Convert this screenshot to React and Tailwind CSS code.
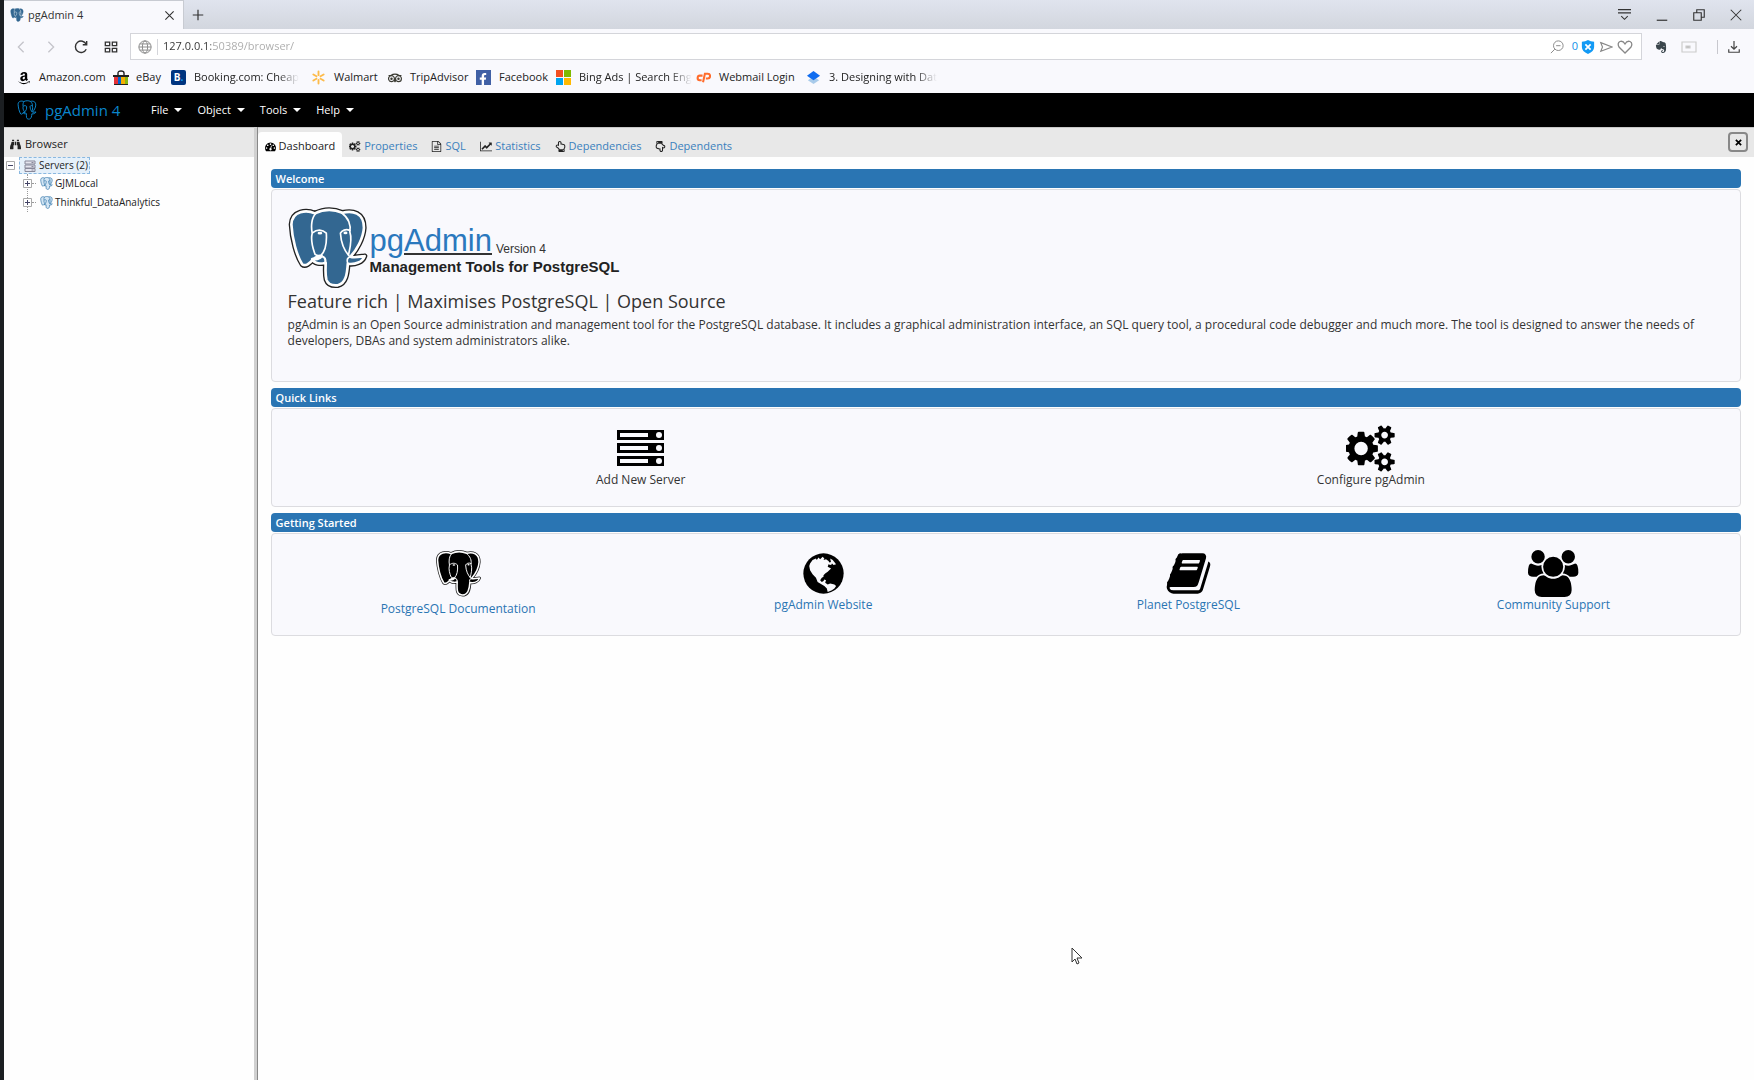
import React from "react";
import { SiPostgresql, SiTripadvisor, SiEvernote } from "react-icons/si";
import { FaBinoculars, FaAmazon, FaFacebookF, FaRegHandPointUp } from "react-icons/fa";

const FA = {
  cogs: [1920, "M832 896q0-106-75-181t-181-75-181 75-75 181 75 181 181 75 181-75 75-181zm768 512q0-52-38-90t-90-38-90 38-38 90q0 53 37.5 90.5t90.5 37.5 90.5-37.5 37.5-90.5zm0-1024q0-52-38-90t-90-38-90 38-38 90q0 53 37.5 90.5t90.5 37.5 90.5-37.5 37.5-90.5zm-384 421v185q0 10-7 19.5t-16 10.5l-155 24q-11 35-32 76 34 48 90 115 7 11 7 20 0 12-7 19-23 30-82.5 89.5t-78.5 59.5q-11 0-21-7l-115-90q-37 19-77 31-11 108-23 155-7 24-30 24h-186q-11 0-20-7.5t-10-17.5l-23-153q-34-10-75-31l-118 89q-7 7-20 7-11 0-21-8-144-133-144-160 0-9 7-19 10-14 41-53t47-61q-23-44-35-82l-152-24q-10-1-17-9.5t-7-19.5v-185q0-10 7-19.5t16-10.5l155-24q11-35 32-76-34-48-90-115-7-11-7-20 0-12 7-20 22-30 82-89t79-59q11 0 21 7l115 90q34-18 77-32 11-108 23-154 7-24 30-24h186q11 0 20 7.5t10 17.5l23 153q34 10 75 31l118-89q8-7 20-7 11 0 21 8 144 133 144 160 0 8-7 19-12 16-42 54t-45 60q23 48 34 82l152 23q10 2 17 10.5t7 19.5zm640 533v140q0 16-149 31-12 27-30 52 51 113 51 138 0 4-4 7-122 71-124 71-8 0-46-47t-52-68q-20 2-30 2t-30-2q-14 21-52 68t-46 47q-2 0-124-71-4-3-4-7 0-25 51-138-18-25-30-52-149-15-149-31v-140q0-16 149-31 13-29 30-52-51-113-51-138 0-4 4-7 4-2 35-20t59-34 30-16q8 0 46 46.5t52 67.5q20-2 30-2t30 2q51-71 92-112l6-2q4 0 124 70 4 3 4 7 0 25-51 138 17 23 30 52 149 15 149 31zm0-1024v140q0 16-149 31-12 27-30 52 51 113 51 138 0 4-4 7-122 71-124 71-8 0-46-47t-52-68q-20 2-30 2t-30-2q-14 21-52 68t-46 47q-2 0-124-71-4-3-4-7 0-25 51-138-18-25-30-52-149-15-149-31v-140q0-16 149-31 13-29 30-52-51-113-51-138 0-4 4-7 4-2 35-20t59-34 30-16q8 0 46 46.5t52 67.5q20-2 30-2t30 2q51-71 92-112l6-2q4 0 124 70 4 3 4 7 0 25-51 138 17 23 30 52 149 15 149 31z"],
  users: [1920, "M593 896q-162 5-265 128h-134q-82 0-138-40.5t-56-118.5q0-353 124-353 6 0 43.5 21t97.5 42.5 119 21.5q67 0 133-23-5 37-5 66 0 139 81 256zm1071 637q0 120-73 189.5t-194 69.5h-874q-121 0-194-69.5t-73-189.5q0-53 3.5-103.5t14-109 26.5-108.5 43-97.5 62-81 85.5-53.5 111.5-20q10 0 43 21.5t73 48 107 48 135 21.5 135-21.5 107-48 73-48 43-21.5q61 0 111.5 20t85.5 53.5 62 81 43 97.5 26.5 108.5 14 109 3.5 103.5zm-1024-1277q0 106-75 181t-181 75-181-75-75-181 75-181 181-75 181 75 75 181zm704 384q0 159-112.5 271.5t-271.5 112.5-271.5-112.5-112.5-271.5 112.5-271.5 271.5-112.5 271.5 112.5 112.5 271.5zm576 225q0 78-56 118.5t-138 40.5h-134q-103-123-265-128 81-117 81-256 0-29-5-66 66 23 133 23 59 0 119-21.5t97.5-42.5 43.5-21q124 0 124 353zm-128-609q0 106-75 181t-181 75-181-75-75-181 75-181 181-75 181 75 75 181z"],
  book: [1792, "M1703 478q40 57 18 129l-275 906q-19 64-76.5 107.5t-122.5 43.5h-923q-77 0-148.5-53.5t-99.5-131.5q-24-67-2-127 0-4 3-27t4-37q1-8-3-21.5t-3-19.5q2-11 8-21t16.5-23.5 16.5-23.5q23-38 45-91.5t30-91.5q3-10 .5-30t-.5-28q3-11 17-28t17-23q21-36 42-92t25-90q1-9-2.5-32t.5-28q4-13 22-30.5t22-22.5q19-26 42.5-84.5t27.5-96.5q1-8-3-25.5t-2-26.5q2-8 9-18t18-23 17-21q8-12 16.5-30.5t15-35 16-36 19.5-32 26.5-23.5 36-11.5 47.5 5.5l-1 3q38-9 51-9h761q74 0 114 56t18 130l-274 906q-36 119-71.5 153.5t-128.5 34.5h-869q-27 0-38 15-11 16-1 43 24 70 144 70h923q29 0 56-15.5t35-41.5l300-987q7-22 5-57 38 15 59 43zm-1064 2q-4 13 2 22.5t20 9.5h608q13 0 25.5-9.5t16.5-22.5l21-64q4-13-2-22.5t-20-9.5h-608q-13 0-25.5 9.5t-16.5 22.5zm-83 256q-4 13 2 22.5t20 9.5h608q13 0 25.5-9.5t16.5-22.5l21-64q4-13-2-22.5t-20-9.5h-608q-13 0-25.5 9.5t-16.5 22.5z"],
  gauge: [1792, "M384 1152q0-53-37.5-90.5t-90.5-37.5-90.5 37.5-37.5 90.5 37.5 90.5 90.5 37.5 90.5-37.5 37.5-90.5zm192-448q0-53-37.5-90.5t-90.5-37.5-90.5 37.5-37.5 90.5 37.5 90.5 90.5 37.5 90.5-37.5 37.5-90.5zm428 481l101-382q6-26-7.5-48.5t-38.5-29.5-48 6.5-30 39.5l-101 382q-60 5-107 43.5t-63 98.5q-20 77 20 146t117 89 146-20 89-117q16-60-6-117t-72-91zm660-33q0-53-37.5-90.5t-90.5-37.5-90.5 37.5-37.5 90.5 37.5 90.5 90.5 37.5 90.5-37.5 37.5-90.5zm-640-640q0-53-37.5-90.5t-90.5-37.5-90.5 37.5-37.5 90.5 37.5 90.5 90.5 37.5 90.5-37.5 37.5-90.5zm448 192q0-53-37.5-90.5t-90.5-37.5-90.5 37.5-37.5 90.5 37.5 90.5 90.5 37.5 90.5-37.5 37.5-90.5zm320 448q0 261-141 483-19 29-54 29h-1402q-35 0-54-29-141-221-141-483 0-182 71-348t191-286 286-191 348-71 348 71 286 191 191 286 71 348z"],
  chart: [2048, "M2048 1536v128h-2048v-1536h128v1408h1920zm-128-1248v435q0 21-19.5 29.5t-35.5-7.5l-121-121-633 633q-10 10-23 10t-23-10l-233-233-416 416-192-192 585-585q10-10 23-10t23 10l233 233 464-464-121-121q-16-16-7.5-35.5t29.5-19.5h435q14 0 23 9t9 23z"],
  file: [1792, "M1596 380q28 28 48 76t20 88v1152q0 40-28 68t-68 28h-1344q-40 0-68-28t-28-68v-1600q0-40 28-68t68-28h896q40 0 88 20t76 48zm-444-244v376h376q-10-29-22-41l-313-313q-12-12-41-22zm384 1528v-1024h-416q-40 0-68-28t-28-68v-416h-768v1536h1280zm-1024-864q0-14 9-23t23-9h704q14 0 23 9t9 23v64q0 14-9 23t-23 9h-704q-14 0-23-9t-9-23v-64zm736 224q14 0 23 9t9 23v64q0 14-9 23t-23 9h-704q-14 0-23-9t-9-23v-64q0-14 9-23t23-9h704zm0 256q14 0 23 9t9 23v64q0 14-9 23t-23 9h-704q-14 0-23-9t-9-23v-64q0-14 9-23t23-9h704z"],
};

function Fa({ name, className }) {
  const [width, d] = FA[name];
  return (
    <svg viewBox={`0 0 ${width} 1792`} className={className} fill="currentColor" aria-hidden="true">
      <path d={d} />
    </svg>
  );
}

const SILHOUETTE =
  "M92 33C68 22 24 24 22 66C24 108 38 160 54 184C64 193 76 182 88 168C98 160 104 162 112 160L105 168C96 168 88 166 84 169C90 182 108 184 124 180C124 200 122 214 126 230C132 248 150 248 160 247C184 242 188 214 190 183C212 186 234 178 240 160C226 162 208 166 198 162C216 142 236 108 238 76C238 30 204 24 174 31C148 20 118 20 92 33Z";

function Elephant({ fill, className }) {
  return (
    <svg viewBox="12 14 238 244" className={className} strokeLinejoin="round" strokeLinecap="round" aria-hidden="true">
      <path d={SILHOUETTE} fill="#fff" stroke="#222" strokeWidth="16" />
      <path d={SILHOUETTE} fill={fill} stroke="#fff" strokeWidth="8" />
      <g fill="none" stroke="#fff" strokeWidth="5">
        <path d="M94 34C82 46 80 72 84 92C78 116 86 136 92 154C98 160 104 158 110 158C124 144 128 122 126 92C114 80 98 80 86 90" />
        <path d="M172 32C192 46 200 68 196 88C204 112 196 138 192 156" />
        <path d="M196 84C184 78 172 84 168 92C170 124 180 144 194 160" />
        <path d="M112 160C122 162 126 168 124 182M190 183C186 172 188 164 198 162" />
      </g>
      <ellipse cx="107" cy="92" rx="7" ry="4" fill="#fff" />
      <ellipse cx="183" cy="91" rx="6" ry="4" fill="#fff" />
      <path d="M84 169C92 180 108 183 122 179C124 168 120 162 112 162C106 170 96 172 84 169Z" fill={fill} stroke="#fff" strokeWidth="5" />
    </svg>
  );
}

function SmallElephant({ className, fill, line, lineWidth = "10" }) {
  return (
    <svg viewBox="12 14 238 244" className={className} strokeLinejoin="round" aria-hidden="true">
      <path d={SILHOUETTE} fill={fill} stroke={line === "#fff" ? fill : line} strokeWidth={lineWidth} />
      <path
        d="M94 34C82 46 80 72 84 92C78 116 86 136 100 158C124 144 128 122 126 92C114 80 98 80 86 90M172 32C192 46 200 68 196 88C204 112 196 138 192 156M196 84C184 78 172 84 168 92C170 124 180 144 194 160"
        fill="none"
        stroke={line}
        strokeWidth={lineWidth}
      />
    </svg>
  );
}

function ServerRack({ className }) {
  return (
    <svg viewBox="0 0 47 47" className={className} aria-hidden="true">
      <path d="M0 5h47v10H0zM0 18h47v10H0zM0 31h47v10H0z" fill="#000" />
      <path d="M3 8h28v4H3zM3 21h28v4H3zM3 34h28v4H3z" fill="#f9f9fd" />
      <g fill="#f9f9fd">
        <circle cx="42" cy="10" r="3" />
        <circle cx="42" cy="23" r="3" />
        <circle cx="42" cy="36" r="3" />
      </g>
    </svg>
  );
}

function Globe({ className }) {
  return (
    <svg viewBox="0 0 56 56" className={className} aria-hidden="true">
      <circle cx="28" cy="28" r="24" fill="#000" />
      <path
        d="M12 16L15 12L19 10L20 12L22 9L24 11L27 8L29 10L28 12L31 11L34 13L35 15L38 14L38 17L36 18L34 17L33 20L37 22L33 26L30 28L28 30L28 32L26 33L24 36L26 38L28 37L29 35L31 36L30 39L33 41L36 40L41 41L43 43L41 46L38 48L33 50L32 46L29 43L26 41L21 38L19 33L15 29L12 24L11 19Z"
        fill="#f9f9fd"
      />
      <path d="M36 10L39 12L43 17L40 18L37 15Z" fill="#f9f9fd" />
    </svg>
  );
}

function Line({ children, className, width = "1.3" }) {
  return (
    <svg viewBox="0 0 16 16" className={className} fill="none" stroke="currentColor" strokeWidth={width} aria-hidden="true">
      {children}
    </svg>
  );
}

const bookmarks = [
  { label: "Amazon.com", w: "w-[97px]", icon: <FaAmazon className="size-[14px] text-black" /> },
  {
    label: "eBay",
    w: "w-[58px]",
    icon: (
      <svg viewBox="0 0 16 16" className="size-4 shrink-0">
        <path d="M5 5V3q0-2 3-2t3 2v2" fill="none" stroke="#222" strokeWidth="1.4" />
        <path d="M0 5h16v2H0z" fill="#222" />
        <path d="M1 7h4v8H1z" fill="#e53238" />
        <path d="M5 7h3v8H5z" fill="#0064d2" />
        <path d="M8 7h4v8H8z" fill="#f5af02" />
        <path d="M12 7h3v8h-3z" fill="#86b817" />
        <path d="M1 14h14v1H1z" fill="#222" />
      </svg>
    ),
  },
  {
    label: "Booking.com: Cheap",
    w: "w-[140px]",
    fade: true,
    icon: (
      <span className="flex size-[15px] items-center justify-center rounded-[2px] bg-[#003580] text-[10px] font-bold text-white">
        B<span className="text-[#12a5f4]">.</span>
      </span>
    ),
  },
  {
    label: "Walmart",
    w: "w-[76px]",
    icon: (
      <svg viewBox="0 0 16 16" className="size-[15px]" stroke="#fdbb4a" strokeWidth="2" strokeLinecap="round">
        <path d="M8 1.500v4M8 10.500v4M2.500 4.800l3.300 1.900M10.200 9.300l3.300 1.900M2.500 11.200l3.300-1.900M10.200 6.700l3.300-1.900" />
      </svg>
    ),
  },
  { label: "TripAdvisor", w: "w-[89px]", icon: <SiTripadvisor className="size-[14px] text-[#3a3a32]" /> },
  {
    label: "Facebook",
    w: "w-[80px]",
    icon: (
      <span className="flex size-[15px] items-end justify-end bg-[#4060a5] pr-[2px]">
        <FaFacebookF className="size-3 text-white" />
      </span>
    ),
  },
  {
    label: "Bing Ads | Search Eng",
    w: "w-[140px]",
    fade: true,
    icon: (
      <span className="grid size-[15px] grid-cols-2 gap-px">
        <i className="bg-[#f25022]" />
        <i className="bg-[#7fba00]" />
        <i className="bg-[#00a4ef]" />
        <i className="bg-[#ffb900]" />
      </span>
    ),
  },
  {
    label: "Webmail Login",
    w: "w-[110px]",
    icon: (
      <svg viewBox="0 0 16 16" className="size-[15px]" fill="none" stroke="#ff6c2c" strokeWidth="2.200">
        <path d="M7 6H4.500a2.500 2.500 0 0 0-.500 5H6M7.500 13L9.500 4H12.500a2.500 2.500 0 0 1 0 5H10.500" />
      </svg>
    ),
  },
  {
    label: "3. Designing with Dat",
    w: "w-[140px]",
    fade: true,
    icon: (
      <svg viewBox="0 0 16 16" className="size-[15px]">
        <path d="M8 7l6 4-6 4-6-4z" fill="#a9cbea" />
        <path d="M8 1l7 5-7 5-7-5z" fill="#0f6cf0" />
      </svg>
    ),
  },
];

function BrowserChrome() {
  return (
    <header className="bg-[#f9f9fd] text-[#333]">
      <div className="flex h-[29px] bg-linear-to-b from-[#e0e4ee] to-[#d2d6de]">
        <div className="flex w-[180px] items-center border-t border-r border-[#c8cbd2] bg-[#f9f9fd] pr-2 pl-[6px]">
          <SmallElephant className="size-[14px]" fill="#336791" line="#fff" lineWidth="8" />
          <span className="ml-1 grow text-[11px]">pgAdmin 4</span>
          <button aria-label="Close tab">
            <Line className="size-[11px]" width="1.6"><path d="M2 2l12 12M14 2L2 14" /></Line>
          </button>
        </div>
        <button aria-label="New tab" className="ml-2">
          <Line className="size-3" width="1.6"><path d="M8 1v14M1 8h14" /></Line>
        </button>
        <div className="ml-auto flex items-center gap-[25px] pr-3">
          <button aria-label="Tab menu"><Line className="size-[13px]"><path d="M0 2h16M0 6h16M4 10l4 4 4-4" /></Line></button>
          <button aria-label="Minimize"><Line className="size-3" width="1.6"><path d="M1 15h14" /></Line></button>
          <button aria-label="Restore"><Line className="size-3" width="1.5"><path d="M1 5h10v10H1zM5 5V1h10v10h-4" /></Line></button>
          <button aria-label="Close"><Line className="size-3" width="1.4"><path d="M1 1l14 14M15 1L1 15" /></Line></button>
        </div>
      </div>

      <div className="flex h-[35px] items-center pr-[14px]">
        <div className="flex w-[126px] items-center gap-4 pl-[10px]">
          <button aria-label="Back" className="text-[#c4c4ca]"><Line className="size-[14px]" width="1.5"><path d="M11 2L5 8l6 6" /></Line></button>
          <button aria-label="Forward" className="text-[#c4c4ca]"><Line className="size-[14px]" width="1.5"><path d="M5 2l6 6-6 6" /></Line></button>
          <button aria-label="Reload"><Line className="size-[14px]" width="1.6"><path d="M14 10.500A6.500 6.500 0 1 1 14 5M14.500 1v4.500H10" /></Line></button>
          <button aria-label="Speed dial"><Line className="size-[14px]" width="1.5"><path d="M1.500 2.500h5v4h-5zM9.500 2.500h5v4h-5zM1.500 9.500h5v4h-5zM9.500 9.500h5v4h-5z" /></Line></button>
        </div>
        <div className="flex h-[27px] grow items-center border border-[#d4d5da] bg-white pr-2 pl-[7px] text-[#888]">
          <Line className="size-[14px]" width="1.1"><circle cx="8" cy="8" r="7" /><ellipse cx="8" cy="8" rx="3" ry="7" /><path d="M1 8h14M2 4.500h12M2 11.500h12" /></Line>
          <span className="mx-[5px] h-4 w-px bg-[#d4d5da]" />
          <input
            aria-label="Address"
            defaultValue="127.0.0.1:50389/browser/"
            className="w-0 grow bg-[linear-gradient(90deg,#333_48px,#aaa_48px)] bg-clip-text text-[11px] text-transparent caret-black outline-none"
          />
          <Line className="size-[14px]" width="1.1"><circle cx="9.500" cy="6.500" r="5.500" /><path d="M5.500 10.500L1 15M7 6.500h5" /></Line>
          <span className="ml-2 text-[11px] text-[#1190e8]">0</span>
          <svg viewBox="0 0 16 16" className="ml-[3px] size-[14px]">
            <path d="M1 2q4 0 7-2 3 2 7 2v6q0 5-7 8-7-3-7-8z" fill="#129af5" />
            <path d="M5 5l6 6M11 5l-6 6" stroke="#fff" strokeWidth="2" />
          </svg>
          <Line className="ml-1 size-[14px]"><path d="M2 3l13 5-13 5 2-5z" /></Line>
          <Line className="ml-1 size-4"><path d="M8 14L2 8Q0 4 3 2.500Q6 1.500 8 5Q10 1.500 13 2.500Q16 4 14 8z" /></Line>
        </div>
        <div className="flex items-center pl-[13px]">
          <SiEvernote className="size-3 text-[#3b464c]" />
          <Line className="ml-[14px] size-4 text-[#ccc]" width="1.2"><path d="M1 3h14v10H1z" /><path d="M5 7h4v2H5z" fill="#bbb" /></Line>
          <span className="mr-[10px] ml-5 h-[14px] w-px bg-[#c8c8ce]" />
          <button aria-label="Downloads"><Line className="size-3 text-[#444]" width="1.6"><path d="M8 0v10M4 7l4 4 4-4M1 11v4h14v-4" /></Line></button>
        </div>
      </div>

      <nav className="flex h-[29px] items-center pb-[2px] pl-3">
        {bookmarks.map((b) => (
          <a key={b.label} href="#" className={`flex shrink-0 items-center gap-2 text-[11px] text-[#222] ${b.w}`}>
            <span className="flex w-[15px] shrink-0 justify-center">{b.icon}</span>
            <span className={b.fade ? "whitespace-nowrap mask-r-from-80%" : "whitespace-nowrap"}>{b.label}</span>
          </a>
        ))}
      </nav>
    </header>
  );
}

function MenuBar() {
  return (
    <nav className="flex h-[34px] items-center bg-black pl-[13px] text-white">
      <SmallElephant className="size-5" fill="#000" line="#0a86cc" lineWidth="12" />
      <a href="#" className="ml-2 w-[98px] text-[15px] text-[#0a86cc]">pgAdmin 4</a>
      <div className="ml-2 flex gap-[15px] text-[11px]">
        {["File", "Object", "Tools", "Help"].map((m) => (
          <button key={m} className="flex items-center gap-[6px]">
            {m}
            <span className="border-x-4 border-t-4 border-x-transparent border-t-white" />
          </button>
        ))}
      </div>
    </nav>
  );
}

function Expander({ open }) {
  return (
    <svg viewBox="0 0 9 9" className="size-[9px] shrink-0" aria-hidden="true">
      <path d="M.5 .5h8v8h-8z" fill="#fff" stroke="#aaa" />
      <path d={open ? "M2 4.500h5" : "M2 4.500h5M4.500 2v5"} stroke="#446" />
    </svg>
  );
}

function Sidebar() {
  return (
    <aside className="w-[250px] shrink-0 bg-[#fefefe] text-[11px] text-[#222]">
      <h2 className="flex h-[30px] items-center gap-1 border-t border-[#c8c8c8] bg-[#e8e8e8] pt-1 pl-[6px]">
        <FaBinoculars className="size-[11px]" />
        Browser
      </h2>
      <ul className="text-[10px]">
        <li>
          <div className="flex h-[17px] items-center pl-[2px]">
            <Expander open />
            <span className="ml-1 flex h-[17px] items-center gap-[3px] border border-dashed border-[#8ab8e0] bg-[#e5f0fa] pr-px pl-1">
              <svg viewBox="0 0 12 12" className="size-3" fill="#e4e4ee" stroke="#889">
                <path d="M1 1h10v3H1zM1 5h10v3H1zM1 8.500h10v3H1z" />
                <path d="M7.500 2.500h2M7.500 6.500h2M7.500 10h2" />
              </svg>
              Servers (2)
            </span>
          </div>
          <ul className="ml-[23px] border-l border-dotted border-[#999]">
            {["GJMLocal", "Thinkful_DataAnalytics"].map((name) => (
              <li key={name} className="-ml-[5px] flex h-[19px] items-center">
                <Expander />
                <span className="w-1 border-t border-dotted border-[#999]" />
                <SmallElephant className="ml-1 size-[13px]" fill="#d4e6f4" line="#3f7fb0" lineWidth="14" />
                <span className="ml-[2px]">{name}</span>
              </li>
            ))}
          </ul>
        </li>
      </ul>
    </aside>
  );
}

const tabs = [
  ["Properties", <Fa name="cogs" className="h-[11px] text-[#222]" />],
  ["SQL", <Fa name="file" className="h-[11px] text-[#222]" />],
  ["Statistics", <Fa name="chart" className="h-[11px] text-[#222]" />],
  ["Dependencies", <FaRegHandPointUp className="size-[11px] text-[#222]" />],
  ["Dependents", <FaRegHandPointUp className="size-[11px] rotate-180 text-[#222]" />],
];

function Panel({ title, children }) {
  return (
    <section className="mb-[6px]">
      <h3 className="h-[19px] rounded-[4px] bg-[#2a75b3] px-[5px] text-[11px] leading-5 font-semibold text-white">
        {title}
      </h3>
      <div className="mt-px rounded-[4px] border border-[#dcdce0] bg-[#f9f9fd]">{children}</div>
    </section>
  );
}

function Tile({ icon, label, link, gap = "" }) {
  return (
    <a href="#" className={`flex flex-col items-center text-[12px] leading-4 ${link ? "text-[#2a75b3]" : "text-[#333]"}`}>
      <span className="flex h-[47px] items-center text-black">{icon}</span>
      <span className={gap}>{label}</span>
    </a>
  );
}

function Dashboard() {
  return (
    <main className="flex grow flex-col border-l border-[#888] bg-[#fefefe]">
      <div className="flex h-[30px] items-start border-t border-[#c8c8c8] bg-[#e8e8e8]">
        <div role="tablist" className="flex h-full items-end text-[11px]">
          <button role="tab" aria-selected="true" className="flex h-[25px] items-center gap-[3px] rounded-t-[4px] bg-[#fefefe] px-[7px] pt-1 text-[#222]">
            <Fa name="gauge" className="h-[11px] text-black" />
            Dashboard
          </button>
          {tabs.map(([name, icon]) => (
            <button key={name} role="tab" className="flex h-[25px] items-center gap-[3px] px-[7px] pt-1 text-[#3a80bd]">
              {icon}
              {name}
            </button>
          ))}
        </div>
        <button aria-label="Close panel" className="mt-1 mr-[6px] ml-auto flex size-5 items-center justify-center rounded-[4px] border-2 border-[#888] text-black">
          <Line className="size-[7px]" width="4"><path d="M2 2l12 12M14 2L2 14" /></Line>
        </button>
      </div>

      <div className="px-[13px] pt-3">
        <Panel title="Welcome">
          <div className="px-4 pt-[17px] pb-8 text-[#333]">
            <div className="flex items-start">
              <Elephant fill="#336791" className="h-[82px] w-20" />
              <div className="pt-[18px] pl-[2px] font-['Liberation_Sans',sans-serif]">
                <div className="flex items-end">
                  <span className="text-[31px] leading-8 text-[#2a78bd]">
                    pg<span className="inline-block h-[30px] border-b-2 border-[#333]">Admin</span>
                  </span>
                  <span className="ml-1 text-[12px] leading-4">Version 4</span>
                </div>
                <div className="text-[15px] leading-5 font-bold text-[#222]">Management Tools for PostgreSQL</div>
              </div>
            </div>
            <h4 className="text-[18px] leading-6">Feature rich | Maximises PostgreSQL | Open Source</h4>
            <p className="mt-1 text-[12px] leading-4">
              pgAdmin is an Open Source administration and management tool for the PostgreSQL database. It includes a
              graphical administration interface, an SQL query tool, a procedural code debugger and much more. The tool
              is designed to answer the needs of developers, DBAs and system administrators alike.
            </p>
          </div>
        </Panel>

        <Panel title="Quick Links">
          <div className="grid grid-cols-2 px-1 pt-4 pb-[18px]">
            <Tile icon={<ServerRack className="size-[47px]" />} label="Add New Server" />
            <Tile icon={<Fa name="cogs" className="h-[47px]" />} label="Configure pgAdmin" />
          </div>
        </Panel>

        <Panel title="Getting Started">
          <div className="grid grid-cols-4 px-1 pt-4 pb-[18px]">
            <Tile link gap="mt-1" icon={<Elephant fill="#000" className="size-[47px]" />} label="PostgreSQL Documentation" />
            <Tile link icon={<Globe className="size-[47px]" />} label="pgAdmin Website" />
            <Tile link icon={<Fa name="book" className="h-[47px]" />} label="Planet PostgreSQL" />
            <Tile link icon={<Fa name="users" className="h-[47px]" />} label="Community Support" />
          </div>
        </Panel>
      </div>
    </main>
  );
}

export default function App() {
  return (
    <div className="relative flex min-h-screen flex-col border-l-4 border-[#1c1f22] bg-white font-['Open_Sans',sans-serif]">
      <BrowserChrome />
      <MenuBar />
      <div className="flex grow">
        <Sidebar />
        <div className="w-[3px] bg-[#d0d0d0]" />
        <Dashboard />
      </div>
      <svg viewBox="0 0 12 18" className="absolute top-[947px] left-[1067px] h-[18px] w-3" aria-hidden="true">
        <path d="M1 1v14l3-3 2 5 2-1-2-5h5z" fill="#fff" stroke="#333" />
      </svg>
    </div>
  );
}
